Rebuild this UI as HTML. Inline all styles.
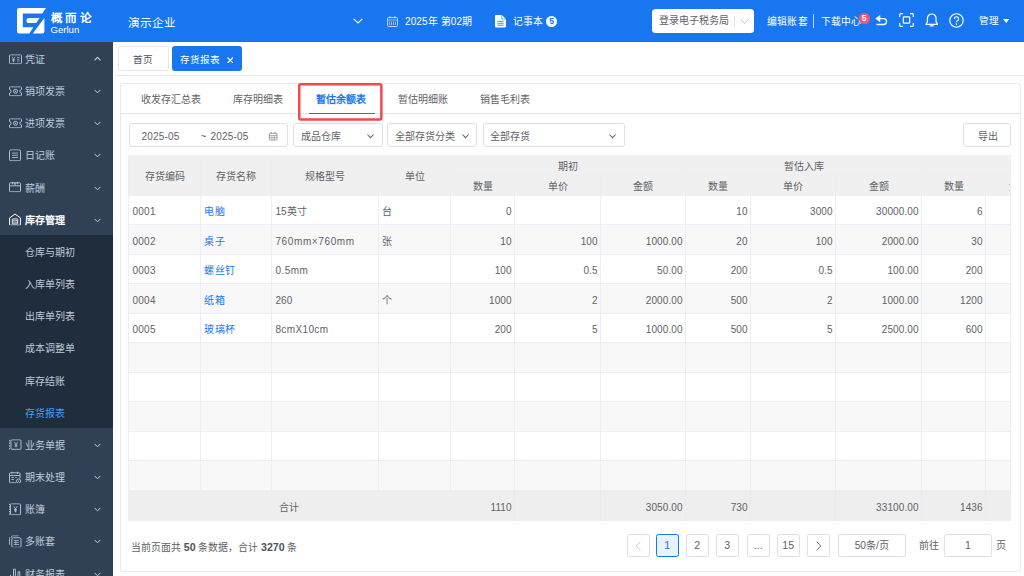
<!DOCTYPE html>
<html lang="zh-CN">
<head>
<meta charset="utf-8">
<title>存货报表 - 暂估余额表</title>
<style>
*{box-sizing:border-box;margin:0;padding:0}
html,body{width:1024px;height:576px;overflow:hidden;background:#fff}
body{font-family:"Liberation Sans",sans-serif;font-size:10px;color:#606266;position:relative}
svg{display:block}
.abs{position:absolute}
/* ---------- header ---------- */
#hdr{position:absolute;left:0;top:0;width:1024px;height:42px;background:#1877f0;color:#fff}
#hdr .t{position:absolute;white-space:nowrap;line-height:12px;font-size:9.8px;letter-spacing:.2px}
#logo{position:absolute;left:17px;top:8.3px}
#brand{position:absolute;left:50.5px;top:11.3px;font-size:11.5px;font-weight:bold;letter-spacing:3.7px;line-height:15px;white-space:nowrap}
#brand2{position:absolute;left:50.5px;top:25px;font-size:9.6px;line-height:10px;white-space:nowrap}
#corp{position:absolute;left:128px;top:16px;font-size:11.7px;line-height:14px;white-space:nowrap}
#taxbtn{position:absolute;left:652px;top:9px;width:102px;height:23.5px;background:#fff;border-radius:3.5px;color:#606266}
#taxbtn span{position:absolute;left:7px;top:5.5px;line-height:12px;font-size:10px;white-space:nowrap}
#taxbtn i{position:absolute;left:82px;top:7px;width:1px;height:10.5px;background:#dcdfe6}
.badge{position:absolute;border-radius:50%;text-align:center;font-weight:bold;font-size:8.6px}
/* ---------- sidebar ---------- */
#side{position:absolute;left:0;top:42px;width:113px;height:534px;background:#304156;color:#bfcbd9;overflow:hidden}
#side .it{position:relative;height:32.17px;line-height:32.17px;white-space:nowrap}
#side .it>*{transform:translateY(1.3px)}
#side .it .ic{position:absolute;left:8.6px;top:10.5px}
#side .it .tx{position:absolute;left:25px;top:1px;font-size:10px}
#side .it .ar{position:absolute;left:93.5px;top:14px}
#side .sub{background:#1f2d3d}
#side .sub .it .tx{left:25px}
#side .on .tx{color:#fff;font-weight:bold}
#side .cur .tx{color:#409eff}
/* ---------- page tabs ---------- */
#ptabs{position:absolute;left:113px;top:42px;width:911px;height:34px;background:#fff}
#ptabs .ln{position:absolute;left:2px;top:33px;width:909px;height:1px;background:#e4e7ed}
.ptab{position:absolute;top:4px;height:25px;border:1px solid #e4e7ed;border-radius:2.5px;line-height:26px;text-align:center;font-size:9.6px;color:#495060;white-space:nowrap}
.ptab.act{background:#1877f0;border-color:#1877f0;color:#fff}
/* ---------- card ---------- */
#card{position:absolute;left:120px;top:83px;width:901px;height:488.5px;border:1px solid #e6e8ee;border-radius:3px;background:#fff}
#stabs{position:absolute;left:121px;top:84px;width:899px;height:30px;border-bottom:1px solid #e4e7ed}
.stab{position:absolute;top:93.5px;line-height:12px;font-size:10px;color:#606266;white-space:nowrap}
.stab.act{color:#1877f0;font-weight:bold}
#sline{position:absolute;left:309px;top:112.7px;width:66px;height:1.6px;background:#1877f0}
.inp{position:absolute;top:123px;height:24px;border:1px solid #dcdfe6;border-radius:3px;background:#fff;white-space:nowrap}
.inp .tx{position:absolute;top:6.5px;line-height:12px;font-size:10px;color:#606266}
.inp svg{position:absolute}
/* ---------- table ---------- */
#twrap{position:absolute;left:128px;top:155px;width:883px;height:366px;overflow:hidden;border-right:1px solid #ebeef5}
table{border-collapse:separate;border-spacing:0;table-layout:fixed;width:1000px;font-size:10px;color:#606266}
th,td{border-right:1px solid #ebeef5;border-bottom:1px solid #ebeef5;overflow:hidden;white-space:nowrap;font-weight:normal}
th{background:#f0f0f0;color:#606266;text-align:center;height:20.4px;line-height:12px;padding-top:4.4px}
td{height:29.5px;line-height:12px;padding:4.6px 4px 0 3.4px;text-align:left;letter-spacing:.12px}
td.r{text-align:right;padding-right:2.3px}
thead tr:first-child th[colspan]{height:21.4px}
thead tr+tr th{height:19.4px;padding-top:3.4px}
tr.s td{background:#f8f8f8}
td.fst,th.fst{border-left:1px solid #ebeef5}
td.fst{letter-spacing:.3px}
td a{color:#1877f0;text-decoration:none}
tfoot td{background:#eeeeee;height:29.8px;border-bottom:none;border-right-color:#e9e9ee}
/* ---------- pagination ---------- */
.pg{position:absolute;top:534px;height:22.5px;width:22.5px;border:1px solid #dcdfe6;border-radius:2.5px;text-align:center;line-height:21.8px;font-size:10.6px;color:#606266;background:#fff;white-space:nowrap}
.pg.act{border-color:#1877f0;background:#e8f3ff;color:#1877f0}
.pg svg{position:absolute;left:7.2px;top:5.8px}
#tot{position:absolute;left:131px;top:540.5px;line-height:12px;font-size:9.9px;color:#606266;white-space:nowrap}
#tot b{color:#4e5157;font-size:10.6px}
</style>
</head>
<body>
<!-- HEADER -->
<div id="hdr">
  <svg id="logo" width="29" height="25.4" viewBox="0 0 29 25.4"><path fill="#fff" d="M2 0H29L25.2 5.6H5.8V19.3H16.3L12.3 25.4H2A2 2 0 0 1 0 23.4V2A2 2 0 0 1 2 0Z"/><path fill="#fff" d="M12 9.9H22.6L19.2 15H12A2.55 2.55 0 0 1 12 9.9Z"/><path fill="#fff" d="M27.4 10V23.4A2 2 0 0 1 25.4 25.4H15.8Z"/></svg>
  <div id="brand">概而论</div>
  <div id="brand2">Gerlun</div>
  <div id="corp">演示企业</div>
  <svg class="abs" style="left:353px;top:18px" width="10" height="6" viewBox="0 0 10 6"><path d="M.6.8L5 5L9.4.8" fill="none" stroke="#fff" stroke-width="1.1"/></svg>
  <svg class="abs" style="left:387px;top:15.5px" width="11" height="11" viewBox="0 0 11 11"><rect x=".5" y="1.5" width="10" height="9" rx="1" fill="none" stroke="#cfe2fb" stroke-width=".9"/><path d="M.5 4H10.5M3 0V2.4M8 0V2.4M2.5 5.5V9M4.5 5.5V9M6.5 5.5V9M8.5 5.5V9" stroke="#cfe2fb" stroke-width=".7" fill="none"/></svg>
  <div class="t" style="left:405px;top:16px;font-size:10px;letter-spacing:.12px">2025年 第02期</div>
  <svg class="abs" style="left:495.2px;top:15px" width="11" height="12.6" viewBox="0 0 10.5 12.5" preserveAspectRatio="none"><path fill="#fff" d="M1 0H6.5L10.5 4V11.5A1 1 0 0 1 9.5 12.5H1A1 1 0 0 1 0 11.5V1A1 1 0 0 1 1 0Z"/><path d="M2.2 6.3H8.3M2.2 8.2H8.3M2.2 10.1H8.3" stroke="#1877f0" stroke-width=".8"/><path d="M6.5 0V4H10.5" fill="none" stroke="#1877f0" stroke-width=".6"/></svg>
  <div class="t" style="left:513px;top:16px">记事本</div>
  <div class="badge" style="left:546px;top:16.2px;width:11.2px;height:11.2px;line-height:11.2px;background:#fff;color:#1877f0">5</div>
  <div id="taxbtn"><span>登录电子税务局</span><i></i>
    <svg class="abs" style="left:87.5px;top:9.5px" width="9" height="5.5" viewBox="0 0 9 5.5"><path d="M.5.6L4.5 4.6L8.5.6" fill="none" stroke="#c0c4cc" stroke-width="1"/></svg>
  </div>
  <div class="t" style="left:767px;top:16px">编辑账套</div>
  <div class="abs" style="left:813px;top:14px;width:1px;height:13.5px;background:rgba(255,255,255,.75)"></div>
  <div class="t" style="left:820.5px;top:16px">下载中心</div>
  <div class="badge" style="left:858.6px;top:13.4px;width:11px;height:11px;line-height:11px;background:#f5566c;color:#fff">5</div>
  <svg class="abs" style="left:875px;top:15px" width="13" height="11.5" viewBox="0 0 13 11.5"><path d="M4.2 3.6H8.6A2.9 2.9 0 0 1 8.6 9.5H2" fill="none" stroke="#fff" stroke-width="1.3" stroke-linecap="round"/><path d="M5 .4L.6 3.6L5 6.8Z" fill="#fff" stroke="#fff" stroke-width=".5" stroke-linejoin="round"/></svg>
  <svg class="abs" style="left:899px;top:13px" width="15" height="14" viewBox="0 0 15 14"><path d="M.7 4V1.6A.9.9 0 0 1 1.6.7H4M11 .7H13.4A.9.9 0 0 1 14.3 1.6V4M14.3 10V12.4A.9.9 0 0 1 13.4 13.3H11M4 13.3H1.6A.9.9 0 0 1 .7 12.4V10" fill="none" stroke="#fff" stroke-width="1.2"/><rect x="4.3" y="3.8" width="6.4" height="6.4" rx=".8" fill="none" stroke="#fff" stroke-width="1.2"/></svg>
  <svg class="abs" style="left:924.5px;top:12.5px" width="13.5" height="14.5" viewBox="0 0 13.5 14.5"><path d="M6.75 1A4.3 4.3 0 0 0 2.45 5.3V8.6L1 11.4H12.5L11.05 8.6V5.3A4.3 4.3 0 0 0 6.75 1Z" fill="none" stroke="#fff" stroke-width="1.2" stroke-linejoin="round"/><path d="M5.3 12.9H8.2" stroke="#fff" stroke-width="1.3" stroke-linecap="round"/></svg>
  <svg class="abs" style="left:948.5px;top:12.5px" width="15" height="15" viewBox="0 0 15 15"><circle cx="7.5" cy="7.5" r="6.7" fill="none" stroke="#fff" stroke-width="1.1"/><path d="M5.4 5.9A2.1 2.1 0 1 1 8.3 7.8C7.7 8.1 7.5 8.5 7.5 9.3" fill="none" stroke="#fff" stroke-width="1.15"/><circle cx="7.5" cy="11.1" r=".8" fill="#fff"/></svg>
  <div class="t" style="left:979px;top:15px;font-size:9.6px">管理</div>
  <svg class="abs" style="left:1002.5px;top:18.5px" width="6.5" height="4" viewBox="0 0 6.5 4"><path d="M0 0H6.5L3.25 4Z" fill="#fff"/></svg>
</div>

<!-- SIDEBAR -->
<div id="side">
  <div class="it"><svg class="ic" width="13" height="10" viewBox="0 0 13 10"><rect x=".5" y=".5" width="12" height="9" rx="1" fill="none" stroke="#bfcbd9" stroke-width=".9"/><path d="M3 2.5L4.5 5L6 2.5M4.5 5V7.8M3.2 5.3H5.8M3.2 6.6H5.8M8 3.2H10.5M8 5H10.5M8 6.8H10.5" stroke="#bfcbd9" stroke-width=".7" fill="none"/></svg><span class="tx">凭证</span><svg class="ar" style="top:13.4px" width="7" height="4.5" viewBox="0 0 7 4.5"><path d="M.5 4L3.5 1L6.5 4" fill="none" stroke="#bfcbd9" stroke-width="1.2"/></svg></div>
  <div class="it"><svg class="ic" width="13" height="10" viewBox="0 0 13 10"><path d="M.5 1.3A.8.8 0 0 1 1.3.5H11.7A.8.8 0 0 1 12.5 1.3V3.3A1.7 1.7 0 0 0 12.5 6.7V8.7A.8.8 0 0 1 11.7 9.5H1.3A.8.8 0 0 1 .5 8.7V6.7A1.7 1.7 0 0 0 .5 3.3Z" fill="none" stroke="#bfcbd9" stroke-width=".9"/><circle cx="6.5" cy="5" r="2" fill="none" stroke="#bfcbd9" stroke-width=".9"/><circle cx="6.5" cy="5" r=".7" fill="#bfcbd9"/></svg><span class="tx">销项发票</span><svg class="ar" width="7" height="4.5" viewBox="0 0 7 4.5"><path d="M.5.5L3.5 3.5L6.5.5" fill="none" stroke="#bfcbd9" stroke-width="1"/></svg></div>
  <div class="it"><svg class="ic" width="13" height="10" viewBox="0 0 13 10"><path d="M.5 1.3A.8.8 0 0 1 1.3.5H11.7A.8.8 0 0 1 12.5 1.3V3.3A1.7 1.7 0 0 0 12.5 6.7V8.7A.8.8 0 0 1 11.7 9.5H1.3A.8.8 0 0 1 .5 8.7V6.7A1.7 1.7 0 0 0 .5 3.3Z" fill="none" stroke="#bfcbd9" stroke-width=".9"/><circle cx="6.5" cy="5" r="2" fill="none" stroke="#bfcbd9" stroke-width=".9"/><circle cx="6.5" cy="5" r=".7" fill="#bfcbd9"/></svg><span class="tx">进项发票</span><svg class="ar" width="7" height="4.5" viewBox="0 0 7 4.5"><path d="M.5.5L3.5 3.5L6.5.5" fill="none" stroke="#bfcbd9" stroke-width="1"/></svg></div>
  <div class="it"><svg class="ic" style="left:9px;top:9.5px" width="12" height="12" viewBox="0 0 12 12"><rect x=".5" y=".5" width="11" height="11" rx="1.5" fill="none" stroke="#bfcbd9" stroke-width=".9"/><path d="M3 3.8H9M3 6H9M3 8.2H9" stroke="#bfcbd9" stroke-width=".8"/></svg><span class="tx">日记账</span><svg class="ar" width="7" height="4.5" viewBox="0 0 7 4.5"><path d="M.5.5L3.5 3.5L6.5.5" fill="none" stroke="#bfcbd9" stroke-width="1"/></svg></div>
  <div class="it"><svg class="ic" style="left:9px;top:9.5px" width="12" height="11" viewBox="0 0 12 11"><path d="M.5 4.5V2.3A.8.8 0 0 1 1.3 1.5H10.7A.8.8 0 0 1 11.5 2.3V4.5H.5V9.7A.8.8 0 0 0 1.3 10.5H10.7A.8.8 0 0 0 11.5 9.7V4.5" fill="none" stroke="#bfcbd9" stroke-width=".9"/><path d="M3.5.3V3M8.5.3V3M5.3 1.5V3H6.7V1.5" stroke="#bfcbd9" stroke-width=".8" fill="none"/></svg><span class="tx">薪酬</span><svg class="ar" width="7" height="4.5" viewBox="0 0 7 4.5"><path d="M.5.5L3.5 3.5L6.5.5" fill="none" stroke="#bfcbd9" stroke-width="1"/></svg></div>
  <div class="it on"><svg class="ic" style="left:9px;top:9px" width="12" height="12.5" viewBox="0 0 12 12.5"><path d="M.6 4.6L6 .7L11.4 4.6V11.3A.6.6 0 0 1 10.8 11.9H1.2A.6.6 0 0 1 .6 11.3Z" fill="none" stroke="#fff" stroke-width="1"/><rect x="3.3" y="5.6" width="5.4" height="5" rx=".6" fill="none" stroke="#fff" stroke-width=".9"/><path d="M3.6 7.3H8.4M3.6 8.9H8.4" stroke="#fff" stroke-width=".7"/></svg><span class="tx">库存管理</span><svg class="ar" width="7" height="4.5" viewBox="0 0 7 4.5"><path d="M.5.5L3.5 3.5L6.5.5" fill="none" stroke="#bfcbd9" stroke-width="1"/></svg></div>
  <div class="sub">
    <div class="it"><span class="tx">仓库与期初</span></div>
    <div class="it"><span class="tx">入库单列表</span></div>
    <div class="it"><span class="tx">出库单列表</span></div>
    <div class="it"><span class="tx">成本调整单</span></div>
    <div class="it"><span class="tx">库存结账</span></div>
    <div class="it cur"><span class="tx">存货报表</span></div>
  </div>
  <div class="it"><svg class="ic" style="left:9px;top:10.5px" width="12.5" height="10.5" viewBox="0 0 12.5 10.5"><rect x="2" y=".5" width="10" height="9.5" rx=".8" fill="none" stroke="#bfcbd9" stroke-width=".9"/><path d="M.6.5V10" stroke="#bfcbd9" stroke-width=".9" stroke-dasharray="1.6 1.1"/><path d="M5.4 2.8L7 5.2L8.6 2.8M7 5.2V8M5.6 5.6H8.4M5.6 6.8H8.4" stroke="#bfcbd9" stroke-width=".75" fill="none"/></svg><span class="tx">业务单据</span><svg class="ar" width="7" height="4.5" viewBox="0 0 7 4.5"><path d="M.5.5L3.5 3.5L6.5.5" fill="none" stroke="#bfcbd9" stroke-width="1"/></svg></div>
  <div class="it"><svg class="ic" style="left:9px;top:9.5px" width="12.5" height="12.5" viewBox="0 0 12.5 12.5"><path d="M.5 4.2H11M.5 2.4A.9.9 0 0 1 1.4 1.5H10.1A.9.9 0 0 1 11 2.4V7M7 11.5H1.4A.9.9 0 0 1 .5 10.6V2.4" fill="none" stroke="#bfcbd9" stroke-width=".9"/><path d="M3 .2V2.6M8.5 .2V2.6M2.3 6.2H5M2.3 8.2H5M6.3 6.2H7.6" stroke="#bfcbd9" stroke-width=".8"/><circle cx="9.6" cy="9.8" r="2.1" fill="none" stroke="#bfcbd9" stroke-width=".9"/><circle cx="9.6" cy="9.8" r=".7" fill="#bfcbd9"/></svg><span class="tx">期末处理</span><svg class="ar" width="7" height="4.5" viewBox="0 0 7 4.5"><path d="M.5.5L3.5 3.5L6.5.5" fill="none" stroke="#bfcbd9" stroke-width="1"/></svg></div>
  <div class="it"><svg class="ic" style="left:9px;top:9.5px" width="12" height="12" viewBox="0 0 12 12"><rect x="1.5" y=".5" width="10" height="11" rx=".8" fill="none" stroke="#bfcbd9" stroke-width=".9"/><path d="M.5.5V11.5" stroke="#bfcbd9" stroke-width=".8" stroke-dasharray="1.4 1"/><path d="M4.9 3L6.5 5.6L8.1 3M6.5 5.6V9M5 6.2H8M5 7.6H8" stroke="#bfcbd9" stroke-width=".8" fill="none"/></svg><span class="tx">账簿</span><svg class="ar" width="7" height="4.5" viewBox="0 0 7 4.5"><path d="M.5.5L3.5 3.5L6.5.5" fill="none" stroke="#bfcbd9" stroke-width="1"/></svg></div>
  <div class="it"><svg class="ic" style="left:9px;top:9.5px" width="12.5" height="12.5" viewBox="0 0 12.5 12.5"><path d="M2.5 2.2V1.4A.9.9 0 0 1 3.4.5H9.6M.5 9.5V3.1A.9.9 0 0 1 1.4 2.2" fill="none" stroke="#bfcbd9" stroke-width=".8"/><rect x="2.8" y="2.5" width="9.2" height="9.5" rx="1.4" fill="none" stroke="#bfcbd9" stroke-width=".9"/><path d="M4.8 5.2H10M4.8 7.2H10M4.8 9.2H10M6.8 5.2V9.6" stroke="#bfcbd9" stroke-width=".7"/></svg><span class="tx">多账套</span><svg class="ar" width="7" height="4.5" viewBox="0 0 7 4.5"><path d="M.5.5L3.5 3.5L6.5.5" fill="none" stroke="#bfcbd9" stroke-width="1"/></svg></div>
  <div class="it"><svg class="ic" style="left:9px;top:10.5px" width="12" height="11" viewBox="0 0 12 11"><path d="M1.5 10.5V6.5M4.5 10.5V.8H6.4V10.5M9 10.5V3.5H10.8V10.5M0 10.5H12" fill="none" stroke="#bfcbd9" stroke-width=".9"/></svg><span class="tx">财务报表</span><svg class="ar" width="7" height="4.5" viewBox="0 0 7 4.5"><path d="M.5.5L3.5 3.5L6.5.5" fill="none" stroke="#bfcbd9" stroke-width="1"/></svg></div>
</div>

<!-- PAGE TABS -->
<div id="ptabs">
  <div class="ln"></div>
  <div class="ptab" style="left:5px;width:50.5px">首页</div>
  <div class="ptab act" style="left:59px;width:70px;text-align:left;padding-left:7px">存货报表<svg class="abs" style="left:53.5px;top:9.5px" width="6.6" height="6.6" viewBox="0 0 6.6 6.6"><path d="M.5.5L6.1 6.1M6.1.5L.5 6.1" stroke="#fff" stroke-width="1.2"/></svg></div>
</div>

<!-- CARD -->
<div id="card"></div>
<div id="stabs"></div>
<div class="stab" style="left:140.5px">收发存汇总表</div>
<div class="stab" style="left:233px">库存明细表</div>
<div class="stab act" style="left:315.5px">暂估余额表</div>
<div class="stab" style="left:398px">暂估明细账</div>
<div class="stab" style="left:480px">销售毛利表</div>
<div id="sline"></div>
<svg class="abs" style="left:297px;top:82px" width="87" height="40" viewBox="0 0 87 40"><rect x="2.25" y="2.25" width="82.1" height="35.3" rx="1.2" fill="none" stroke="#f4484d" stroke-width="2.5"/></svg>

<!-- FILTERS -->
<div class="inp" style="left:129px;width:159px">
  <span class="tx" style="left:11.5px;letter-spacing:.2px">2025-05</span><span class="tx" style="left:70.5px">~</span><span class="tx" style="left:80.5px;letter-spacing:.2px">2025-05</span>
  <svg style="left:139px;top:8px" width="8.5" height="8.5" viewBox="0 0 8.5 8.5"><rect x=".5" y="1.2" width="7.5" height="6.8" rx=".8" fill="none" stroke="#8f9298" stroke-width=".9"/><path d="M.5 3.4H8M2.4 0V2M6.1 0V2M3 3.4V8M5.5 3.4V8M.5 5.7H8" stroke="#8f9298" stroke-width=".7"/></svg>
</div>
<div class="inp" style="left:293px;width:89.5px"><span class="tx" style="left:6.5px">成品仓库</span><svg style="left:73px;top:10px" width="7" height="4.5" viewBox="0 0 7 4.5"><path d="M.4.5L3.5 3.7L6.6.5" fill="none" stroke="#63666b" stroke-width="1.05"/></svg></div>
<div class="inp" style="left:387px;width:89.5px"><span class="tx" style="left:7px">全部存货分类</span><svg style="left:73.5px;top:10px" width="7" height="4.5" viewBox="0 0 7 4.5"><path d="M.4.5L3.5 3.7L6.6.5" fill="none" stroke="#63666b" stroke-width="1.05"/></svg></div>
<div class="inp" style="left:482.5px;width:142px"><span class="tx" style="left:6.5px">全部存货</span><svg style="left:125.5px;top:10px" width="7" height="4.5" viewBox="0 0 7 4.5"><path d="M.4.5L3.5 3.7L6.6.5" fill="none" stroke="#63666b" stroke-width="1.05"/></svg></div>
<div class="inp" style="left:963px;width:48px"><span class="tx" style="left:14px">导出</span></div>

<!-- TABLE -->
<div id="twrap">
<table>
<colgroup><col style="width:73px"><col style="width:71px"><col style="width:107px"><col style="width:72px"><col style="width:64px"><col style="width:86px"><col style="width:85px"><col style="width:65px"><col style="width:85px"><col style="width:86px"><col style="width:64px"><col style="width:142px"></colgroup>
<thead>
<tr><th rowspan="2" class="fst">存货编码</th><th rowspan="2">存货名称</th><th rowspan="2">规格型号</th><th rowspan="2">单位</th><th colspan="3">期初</th><th colspan="3">暂估入库</th><th colspan="2" style="text-align:left;border-right:none">&nbsp;</th></tr>
<tr><th>数量</th><th>单价</th><th>金额</th><th>数量</th><th>单价</th><th>金额</th><th>数量</th><th style="text-align:left;padding-left:22.6px">金额</th></tr>
</thead>
<tbody>
<tr><td class="fst">0001</td><td><a>电脑</a></td><td>15英寸</td><td>台</td><td class="r">0</td><td class="r"></td><td class="r"></td><td class="r">10</td><td class="r">3000</td><td class="r">30000.00</td><td class="r">6</td><td></td></tr>
<tr class="s"><td class="fst">0002</td><td><a>桌子</a></td><td style="letter-spacing:.62px">760mm×760mm</td><td>张</td><td class="r">10</td><td class="r">100</td><td class="r">1000.00</td><td class="r">20</td><td class="r">100</td><td class="r">2000.00</td><td class="r">30</td><td></td></tr>
<tr><td class="fst">0003</td><td><a>螺丝钉</a></td><td style="letter-spacing:.5px">0.5mm</td><td></td><td class="r">100</td><td class="r">0.5</td><td class="r">50.00</td><td class="r">200</td><td class="r">0.5</td><td class="r">100.00</td><td class="r">200</td><td></td></tr>
<tr class="s"><td class="fst">0004</td><td><a>纸箱</a></td><td>260</td><td>个</td><td class="r">1000</td><td class="r">2</td><td class="r">2000.00</td><td class="r">500</td><td class="r">2</td><td class="r">1000.00</td><td class="r">1200</td><td></td></tr>
<tr><td class="fst">0005</td><td><a>玻璃杯</a></td><td style="letter-spacing:.38px">8cmX10cm</td><td></td><td class="r">200</td><td class="r">5</td><td class="r">1000.00</td><td class="r">500</td><td class="r">5</td><td class="r">2500.00</td><td class="r">600</td><td></td></tr>
<tr class="s"><td class="fst"></td><td></td><td></td><td></td><td></td><td></td><td></td><td></td><td></td><td></td><td></td><td></td></tr>
<tr><td class="fst"></td><td></td><td></td><td></td><td></td><td></td><td></td><td></td><td></td><td></td><td></td><td></td></tr>
<tr class="s"><td class="fst"></td><td></td><td></td><td></td><td></td><td></td><td></td><td></td><td></td><td></td><td></td><td></td></tr>
<tr><td class="fst"></td><td></td><td></td><td></td><td></td><td></td><td></td><td></td><td></td><td></td><td></td><td></td></tr>
<tr class="s"><td class="fst"></td><td></td><td></td><td></td><td></td><td></td><td></td><td></td><td></td><td></td><td></td><td></td></tr>
</tbody>
<tfoot>
<tr><td colspan="4" style="text-align:center;border-right-color:#eee">合计</td><td class="r">1110</td><td class="r"></td><td class="r">3050.00</td><td class="r">730</td><td class="r"></td><td class="r">33100.00</td><td class="r">1436</td><td></td></tr>
</tfoot>
</table>
</div>

<!-- PAGINATION -->
<div id="tot">当前页面共 <b>50</b> 条数据，合计 <b>3270</b> 条</div>
<div class="pg" style="left:627px"><svg width="7" height="10" viewBox="0 0 7 10"><path d="M5.3 .6L1.2 5L5.3 9.4" fill="none" stroke="#c0c4cc" stroke-width=".9"/></svg></div>
<div class="pg act" style="left:656px">1</div>
<div class="pg" style="left:686px">2</div>
<div class="pg" style="left:716px">3</div>
<div class="pg" style="left:747px">...</div>
<div class="pg" style="left:777px">15</div>
<div class="pg" style="left:807px"><svg width="7" height="10" viewBox="0 0 7 10"><path d="M1.7 .6L5.8 5L1.7 9.4" fill="none" stroke="#606266" stroke-width=".9"/></svg></div>
<div class="pg" style="left:837.5px;width:68.5px;font-size:10.2px">50条/页</div>
<div class="abs" style="left:919px;top:540px;line-height:12px;font-size:10px;white-space:nowrap">前往</div>
<div class="pg" style="left:944px;width:48px">1</div>
<div class="abs" style="left:996px;top:540px;line-height:12px;font-size:10px;white-space:nowrap">页</div>
</body>
</html>
